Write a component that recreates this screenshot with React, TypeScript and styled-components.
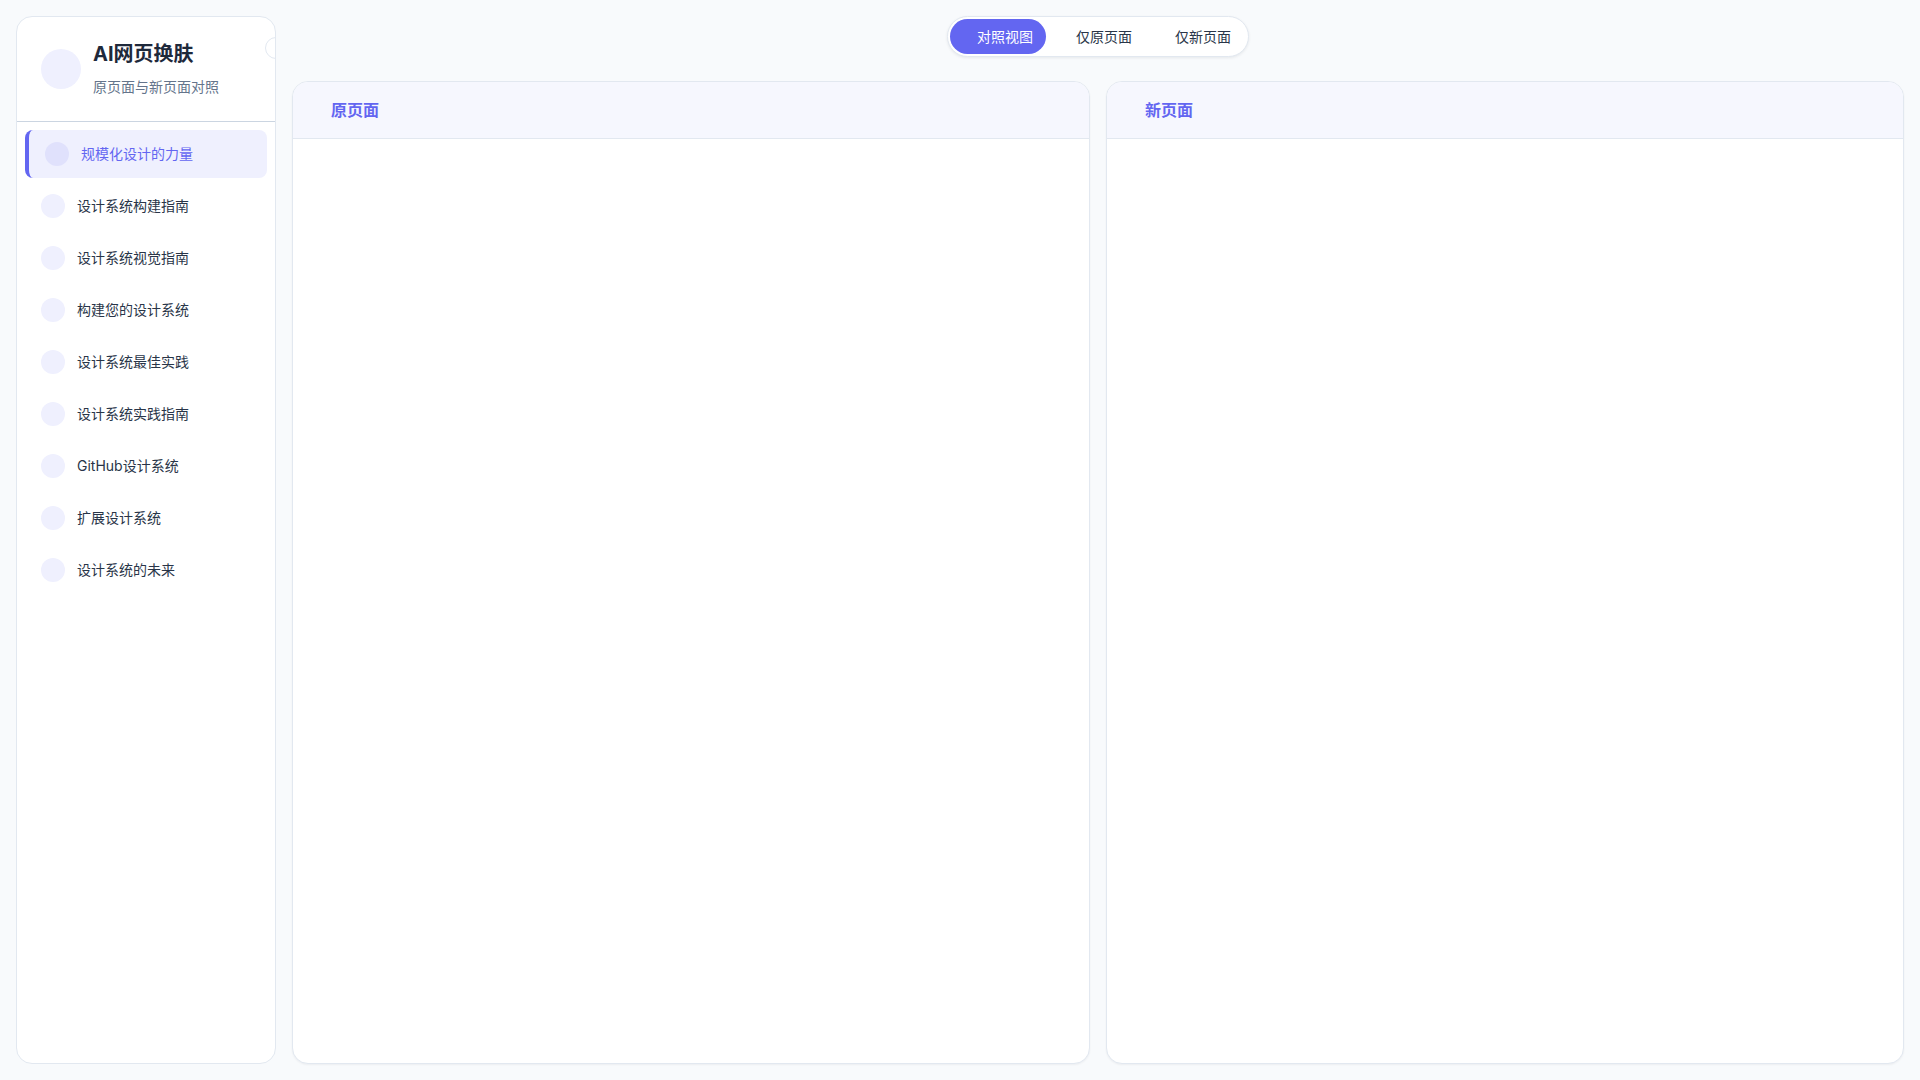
import { useState } from "react";
import styled, { createGlobalStyle } from "styled-components";

const GlobalStyle = createGlobalStyle`
  * {
    box-sizing: border-box;
  }
  html, body {
    margin: 0;
    padding: 0;
    height: 100%;
    background: #f8fafc;
    font-family: Inter, "Noto Sans CJK SC", sans-serif;
  }
`;

const Wrapper = styled.div`
  display: flex;
  gap: 16px;
  height: 100vh;
  padding: 16px;
  overflow: hidden;
`;

const Sidebar = styled.aside`
  position: relative;
  display: flex;
  flex-direction: column;
  flex: 0 0 260px;
  background: #fff;
  border: 1px solid #e2e8f0;
  border-radius: 16px;
  overflow: hidden;
`;

const SidebarHeader = styled.div`
  display: flex;
  align-items: center;
  gap: 12px;
  height: 105px;
  padding: 0 24px;
  border-bottom: 1px solid #cbd5e1;
`;

const Brand = styled.div`
  padding-bottom: 2px;
`;

const Circle = styled.span<{ $size: number; $dark?: boolean }>`
  flex: 0 0 ${(p) => p.$size}px;
  width: ${(p) => p.$size}px;
  height: ${(p) => p.$size}px;
  border-radius: 50%;
  background: ${(p) => (p.$dark ? "#e0e1fc" : "#eff0fe")};
`;

const Title = styled.div`
  font-size: 20px;
  line-height: 30px;
  font-weight: 700;
  color: #1e293b;
`;

const Subtitle = styled.div`
  margin-top: 8px;
  font-size: 14px;
  line-height: 20px;
  color: #64748b;
`;

const CollapseButton = styled.button`
  position: absolute;
  top: 20px;
  right: -12px;
  width: 22px;
  height: 22px;
  padding: 0;
  background: #fff;
  border: 1px solid #e2e8f0;
  border-radius: 50%;
`;

const Nav = styled.nav`
  display: flex;
  flex-direction: column;
  gap: 4px;
  padding: 8px;
`;

const NavItem = styled.a<{ $active?: boolean }>`
  display: flex;
  align-items: center;
  gap: 12px;
  height: 48px;
  padding: 0 16px;
  border-left: ${(p) => (p.$active ? "4px solid #6366f1" : "none")};
  border-radius: 8px;
  background: ${(p) => (p.$active ? "#eff0fe" : "transparent")};
  color: ${(p) => (p.$active ? "#6366f1" : "#293548")};
  font-size: 14px;
  line-height: 20px;
  cursor: pointer;
`;

const Main = styled.main`
  display: flex;
  flex-direction: column;
  flex: 1;
  min-width: 0;
  gap: 24px;
`;

const ToolbarRow = styled.div`
  display: flex;
  justify-content: center;
`;

const Toolbar = styled.div`
  display: flex;
  gap: 3px;
  height: 41px;
  padding: 2px 4px 2px 2px;
  background: #fff;
  border: 1px solid #e2e8f0;
  border-radius: 21px;
  box-shadow: 0 1px 3px rgba(15, 23, 42, 0.08);
`;

const ToggleButton = styled.button<{ $active?: boolean }>`
  width: 96px;
  padding: 0 0 2px 27px;
  text-align: left;
  border: none;
  border-radius: 18px;
  background: ${(p) => (p.$active ? "#6366f1" : "transparent")};
  color: ${(p) => (p.$active ? "#fff" : "#293548")};
  font-family: inherit;
  font-size: 14px;
  cursor: pointer;
`;

const Panels = styled.div`
  display: flex;
  flex: 1;
  gap: 16px;
  min-height: 0;
`;

const Panel = styled.section`
  display: flex;
  flex-direction: column;
  flex: 1;
  min-width: 0;
  background: #fff;
  border: 1px solid #e2e8f0;
  border-radius: 16px;
  overflow: hidden;
  box-shadow: 0 1px 2px rgba(15, 23, 42, 0.05);
`;

const PanelHeader = styled.header`
  display: flex;
  align-items: center;
  height: 57px;
  padding: 0 38px 3px;
  background: #f6f7fe;
  border-bottom: 1px solid #e2e8f0;
  color: #6366f1;
  font-size: 16px;
  font-weight: 700;
`;

const PanelBody = styled.div`
  flex: 1;
`;

const pages = [
  "规模化设计的力量",
  "设计系统构建指南",
  "设计系统视觉指南",
  "构建您的设计系统",
  "设计系统最佳实践",
  "设计系统实践指南",
  "GitHub设计系统",
  "扩展设计系统",
  "设计系统的未来",
];

const views = ["对照视图", "仅原页面", "仅新页面"];

export default function App() {
  const [page, setPage] = useState(0);
  const [view, setView] = useState(0);
  return (
    <>
      <GlobalStyle />
      <Wrapper>
        <Sidebar>
          <SidebarHeader>
            <Circle $size={40} />
            <Brand>
              <Title>AI网页换肤</Title>
              <Subtitle>原页面与新页面对照</Subtitle>
            </Brand>
          </SidebarHeader>
          <CollapseButton aria-label="收起" />
          <Nav>
            {pages.map((name, i) => (
              <NavItem key={name} $active={i === page} onClick={() => setPage(i)}>
                <Circle $size={24} $dark={i === page} />
                {name}
              </NavItem>
            ))}
          </Nav>
        </Sidebar>
        <Main>
          <ToolbarRow>
            <Toolbar>
              {views.map((name, i) => (
                <ToggleButton key={name} $active={i === view} onClick={() => setView(i)}>
                  {name}
                </ToggleButton>
              ))}
            </Toolbar>
          </ToolbarRow>
          <Panels>
            <Panel>
              <PanelHeader>原页面</PanelHeader>
              <PanelBody />
            </Panel>
            <Panel>
              <PanelHeader>新页面</PanelHeader>
              <PanelBody />
            </Panel>
          </Panels>
        </Main>
      </Wrapper>
    </>
  );
}
